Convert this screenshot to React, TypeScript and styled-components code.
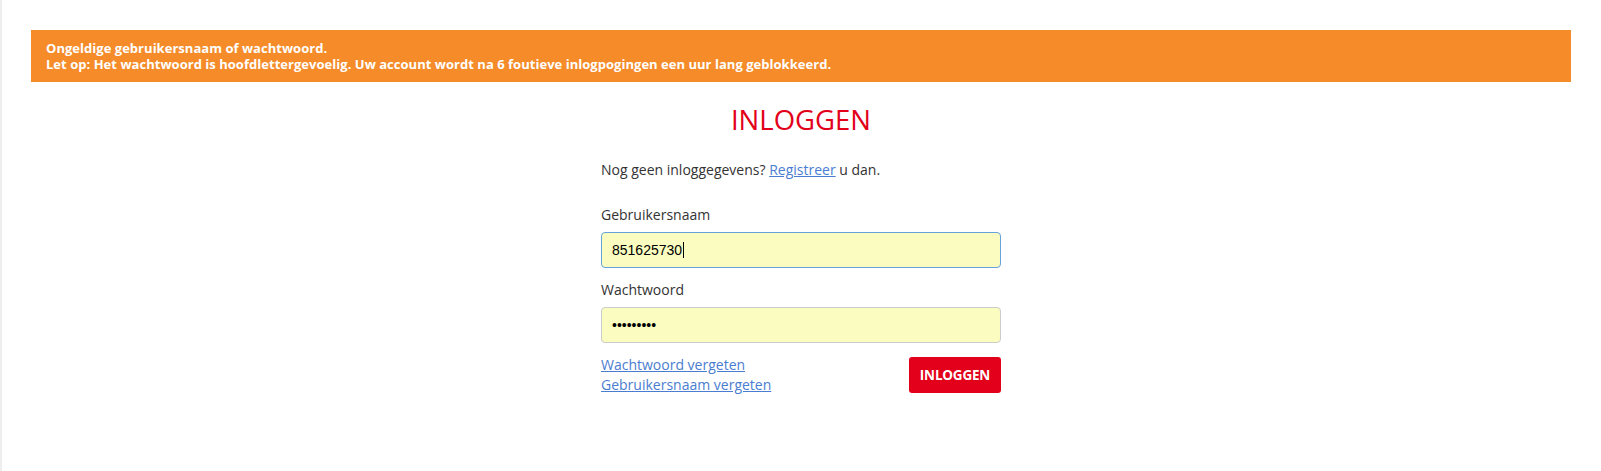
import React from "react";
import styled, { createGlobalStyle } from "styled-components";

const GlobalStyle = createGlobalStyle`
  html, body {
    margin: 0;
    padding: 0;
    background: #ffffff;
  }
  body {
    font-family: "Open Sans", "Noto Sans", sans-serif;
    color: #333333;
  }
  * { box-sizing: border-box; }
`;

const Page = styled.div`
  min-height: 100vh;
  border-left: 2px solid #eeeeee;
  padding: 30px 30px 0 29px;
`;

const AlertBanner = styled.div`
  background: #f58b29;
  color: #ffffff;
  font-size: 13px;
  font-weight: 700;
  line-height: 16px;
  letter-spacing: 0.03px;
  padding: 10px 15px;
`;

const AlertLine = styled.div``;

const Form = styled.form`
  width: 400px;
  margin: 0 auto;
  display: flex;
  flex-direction: column;
`;

const Title = styled.h1`
  margin: 23px 0 0;
  font-size: 27.5px;
  line-height: 30px;
  font-weight: 400;
  color: #e2001a;
  text-align: center;
`;

const Intro = styled.p`
  margin: 25px 0 0;
  font-size: 14px;
  line-height: 20px;
  color: #333333;
`;

const Link = styled.a`
  color: #4a7dd0;
  text-decoration: underline;
  cursor: pointer;
`;

const FieldGroup = styled.div<{ $first?: boolean }>`
  display: flex;
  flex-direction: column;
  margin-top: ${(p) => (p.$first ? "25px" : "12px")};
`;

const Label = styled.label`
  font-size: 14px;
  line-height: 20px;
  color: #333333;
  margin-bottom: 7px;
`;

const FieldBox = styled.div<{ $focused?: boolean }>`
  height: 36px;
  width: 100%;
  display: flex;
  align-items: center;
  padding: 0 10px;
  background: #fafdbf;
  border: 1px solid ${(p) => (p.$focused ? "#66a3dc" : "#cccccc")};
  border-radius: 4px;
  font-family: "Liberation Sans", Arial, sans-serif;
  font-size: 14px;
  color: #000000;
`;

const Caret = styled.span`
  display: inline-block;
  width: 1px;
  height: 16px;
  background: #000000;
  margin-left: 1px;
`;

const Actions = styled.div`
  margin-top: 12px;
  display: flex;
  justify-content: space-between;
  align-items: center;
`;

const LinkList = styled.div`
  display: flex;
  flex-direction: column;
  font-size: 14px;
  line-height: 20px;
`;

const SubmitButton = styled.button`
  height: 36px;
  width: 92px;
  padding: 0;
  background: #e2001a;
  border: none;
  border-radius: 3px;
  color: #ffffff;
  font-family: "Open Sans", "Noto Sans", sans-serif;
  font-size: 13.5px;
  font-weight: 700;
  letter-spacing: -0.2px;
  cursor: pointer;
`;

export default function App() {
  return (
    <>
      <GlobalStyle />
      <Page>
        <AlertBanner>
          <AlertLine>Ongeldige gebruikersnaam of wachtwoord.</AlertLine>
          <AlertLine>
            Let op: Het wachtwoord is hoofdlettergevoelig. Uw account wordt na 6 foutieve inlogpogingen een uur lang geblokkeerd.
          </AlertLine>
        </AlertBanner>
        <Form onSubmit={(e) => e.preventDefault()}>
          <Title>INLOGGEN</Title>
          <Intro>
            Nog geen inloggegevens? <Link>Registreer</Link> u dan.
          </Intro>
          <FieldGroup $first>
            <Label>Gebruikersnaam</Label>
            <FieldBox $focused>
              851625730
              <Caret />
            </FieldBox>
          </FieldGroup>
          <FieldGroup>
            <Label>Wachtwoord</Label>
            <FieldBox>•••••••••</FieldBox>
          </FieldGroup>
          <Actions>
            <LinkList>
              <Link>Wachtwoord vergeten</Link>
              <Link>Gebruikersnaam vergeten</Link>
            </LinkList>
            <SubmitButton type="submit">INLOGGEN</SubmitButton>
          </Actions>
        </Form>
      </Page>
    </>
  );
}
